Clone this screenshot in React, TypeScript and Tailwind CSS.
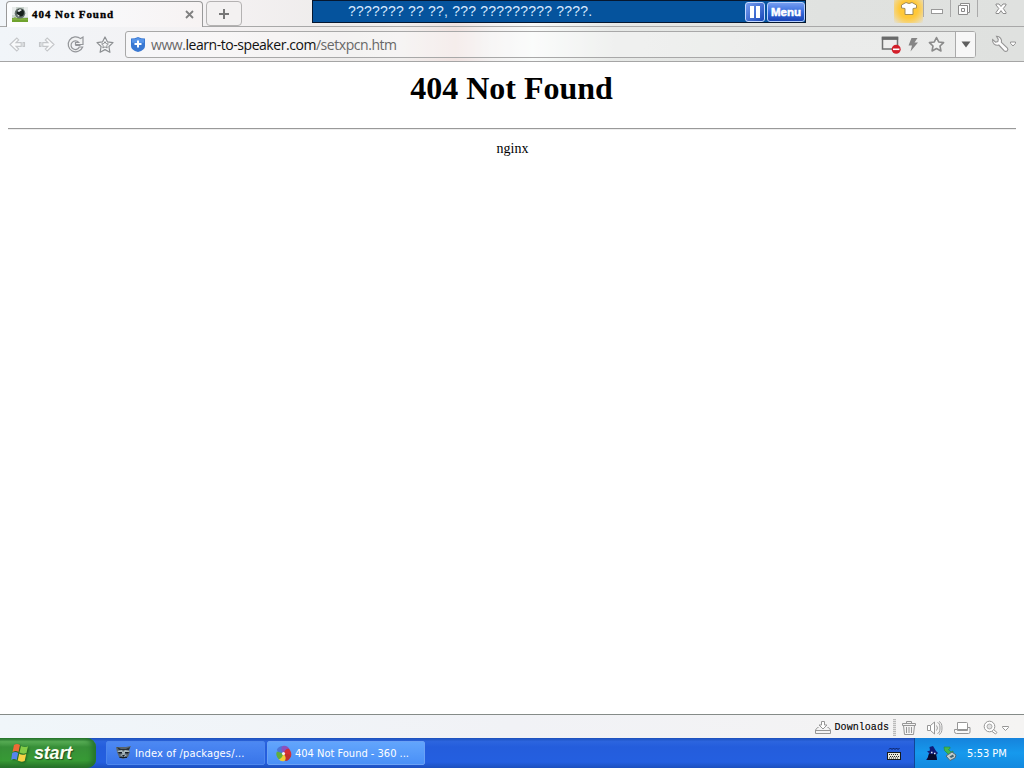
import React from "react";

const sans = "font-['Open_Sans','Noto_Sans',sans-serif]";
const tahoma = "font-['DejaVu_Sans_Condensed','DejaVu_Sans',sans-serif]";

function Favicon() {
  return (
    <svg width="16" height="16" viewBox="0 0 16 16" className="shrink-0">
      <rect width="16" height="12" fill="#c9d2cc" />
      <path d="M0 0h4v8H0zM12 0h4v10h-4z" fill="#e8eceb" />
      <rect y="11" width="16" height="4" fill="#6fa32e" />
      <path d="M0 12l3-2 3 2 4-1 6 1v1H0z" fill="#82ad43" />
      <circle cx="8" cy="6.3" r="5.3" fill="#66736f" />
      <circle cx="8.3" cy="5.7" r="3.7" fill="#17201d" />
      <path d="M5 4l3-2 2 1-3 2zM5 7l3 2-2 .5z" fill="#e9eeee" />
    </svg>
  );
}

function Arrow({ flip = false }: { flip?: boolean }) {
  return (
    <svg width="17" height="17" viewBox="0 0 17 17" className={flip ? "-scale-x-100" : ""}>
      <path d="M1 8.5 7.8 2l1.9 1.9L7 6.6h5.2v3.8H7l2.7 2.7L7.8 15zM14 6.6h1.5v3.8H14z" fill="#f9fafb" stroke="#c4c6c9" strokeWidth="1.1" />
    </svg>
  );
}

function Reload() {
  return (
    <svg width="19" height="19" viewBox="0 0 19 19">
      <path d="M14.6 3.6 17 2v7.500H9.500v-2h3.200a4.300 4.300 0 1 0 .6 4.500h3.400a7.500 7.500 0 1 1-2.100-8.400z" fill="#f1f2f3" stroke="#94969a" strokeWidth="1.2" />
      <path d="M9.500 7.500v3h5" stroke="#94969a" fill="none" />
    </svg>
  );
}

function Star({ small = false }: { small?: boolean }) {
  return small ? (
    <svg width="17" height="17" viewBox="0 0 18 18">
      <path d="m9 1.6 2.3 4.7 5.2.7-3.8 3.6 1 5.2L9 13.3l-4.7 2.5 1-5.2L1.5 7l5.2-.7z" fill="#f2f3f2" stroke="#8b8b8b" strokeWidth="1.7" strokeLinejoin="round" />
    </svg>
  ) : (
    <svg width="18" height="18" viewBox="0 0 18 18">
      <path d="m9 1 2.4 4.8 5.6.8-4.1 3.9 1 5.8L9 13.6l-4.900 2.700 1-5.800L1 6.600l5.600-.8z" fill="#f7f8f9" stroke="#8d9093" strokeWidth="1.2" strokeLinejoin="round" />
      <path d="m9 5.600 1.100 2 2.300.4-1.700 1.600.5 2.400L9 10.900 6.800 12l.5-2.400L5.600 8l2.300-.4z" fill="none" stroke="#8d9093" />
    </svg>
  );
}

function Shield() {
  return (
    <svg width="14" height="15" viewBox="0 0 14 15" className="shrink-0">
      <path d="M0 1.5Q4 1.5 7 0q3 1.5 7 1.5V9q0 4-7 6-7-2-7-6z" fill="#3978d2" />
      <path d="M1 2.3q3.5 0 6-1.3 2.5 1.3 6 1.3v3.5H1z" fill="#5795e9" />
      <path d="M7 3.5v7M3.5 7h7" stroke="#fff" strokeWidth="2" />
    </svg>
  );
}

function BlockedWindow() {
  return (
    <svg width="20" height="18" viewBox="0 0 20 18">
      <rect x="1.500" y="1.500" width="15" height="11.500" fill="#eeeeed" stroke="#6f7070" strokeWidth="1.500" />
      <path d="M.8 2.300h16.400" stroke="#696a6a" strokeWidth="3.200" />
      <circle cx="15.200" cy="13.300" r="4.500" fill="#d31f2a" />
      <path d="M12 13.300h6.400" stroke="#fff" strokeWidth="1.600" />
    </svg>
  );
}

function Wrench() {
  return (
    <svg width="26" height="18" viewBox="0 0 26 18">
      <path d="M5.500 1.300a4.800 4.800 0 0 1 4.900 6l5.800 5.600a2 2 0 0 1-2.900 2.900L7.800 10a4.800 4.800 0 0 1-6.200-5.400l3 2.600 2.200-.6.5-2.200z" fill="#fcfcfc" stroke="#949494" strokeWidth="1.100" />
      <path d="M19.500 7h5v1.300L22 11l-2.500-2.700z" fill="#fff" stroke="#949494" />
    </svg>
  );
}

function WindowControls() {
  return (
    <div className="ml-auto flex h-[23px] shrink-0">
      <div className="flex h-[23px] w-[29px] justify-center bg-[radial-gradient(ellipse_at_50%_40%,#ffc839_0%,#ffc839_45%,#f6d376_68%,rgba(235,222,190,0)_100%)]">
        <svg width="16" height="17" viewBox="0 0 16 17">
          <path d="M5 2.500q3 2 6 0l4.500 2.500v3l-3.500.5V14.500H4V8.500L.5 8V5z" fill="#fff" stroke="#a38d58" />
        </svg>
      </div>
      <div className="flex h-[17px] w-[28px] justify-center border-x border-[#aaa]">
        <svg width="14" height="16" viewBox="0 0 14 16"><rect x="1.500" y="9.500" width="11" height="4" fill="#fff" stroke="#999" /></svg>
      </div>
      <div className="flex h-[17px] w-[27px] justify-center border-r border-[#aaa]">
        <svg width="14" height="16" viewBox="0 0 14 16"><path d="M3.500 3.500h9v9h-2v2h-9v-9h2z" fill="#fcfcfc" stroke="#8c8c8c" /><path d="M3.500 5.500h7v7M4.500 8.500h3v3h-3z" fill="none" stroke="#888" /></svg>
      </div>
      <div className="flex w-[46px] justify-center">
        <svg width="14" height="16" viewBox="0 0 14 16"><path d="M2 4h3l2 2.500L9 4h3v1L9.300 8.500 12 12.500v1H9l-2-2.900-2 2.900H2v-1l2.800-4L2 5z" fill="#fff" stroke="#8c8c8c" /></svg>
      </div>
    </div>
  );
}

function TabStrip() {
  return (
    <div className="relative flex h-[27px] shrink-0 border-b border-[#a8a8a8] pl-[6px]">
      <div className="mt-px flex h-[26px] w-[197px] shrink-0 items-center rounded-t-[4px] border border-b-0 border-[#999] bg-linear-to-r from-[#fcfdfe] via-[#f8f8fa] to-[#f7f3f3] pl-[5px] pr-[8px]">
        <Favicon />
        <span className="ml-[4px] whitespace-pre font-['Liberation_Serif',serif] text-[11px] font-bold leading-none tracking-[0.95px] text-black [-webkit-text-stroke:0.35px_black]">404 Not Found</span>
        <svg width="9" height="9" viewBox="0 0 9 9" className="ml-auto"><path d="m1 1 7 7M8 1 1 8" stroke="#808080" strokeWidth="1.8" /></svg>
      </div>
      <div className="ml-[3px] mt-px flex h-[25px] w-[36px] shrink-0 items-center justify-center rounded-[4px] border border-[#b4b2b2] bg-[#f3f1f1]">
        <svg width="12" height="12" viewBox="0 0 12 12"><path d="M6 1v10M1 6h10" stroke="#777" strokeWidth="2" /></svg>
      </div>
      <WindowControls />
      <div className="absolute left-[312px] top-0 flex h-[23px] w-[494px] items-center border border-[#06172f] bg-[#05539d] pl-[35px]">
        <span className="-mt-px whitespace-pre font-['Liberation_Sans',sans-serif] text-[14px] leading-none tracking-[0.2px] text-[#d7e9ff]">??????? ?? ??, ??? ????????? ????.</span>
        <div className="ml-auto flex h-[20px] w-[20px] items-center justify-center gap-[2px] rounded-[3px] border border-[#c2d8ff] bg-linear-to-br from-[#779df1] to-[#1746b8]">
          <i className="h-[12px] w-[4px] bg-white" /><i className="h-[12px] w-[4px] bg-white" />
        </div>
        <div className="ml-[2px] flex h-[20px] w-[38px] items-center justify-center rounded-[3px] border border-[#b5cffd] bg-linear-to-b from-[#759df0] via-[#356add] to-[#1743b5] pt-[2px] font-['Liberation_Sans',sans-serif] text-[11.5px] font-bold leading-none text-white [-webkit-text-stroke:0.5px_white]">Menu</div>
      </div>
    </div>
  );
}

function Toolbar() {
  return (
    <div className="flex h-[35px] shrink-0 items-center border-b border-[#a5a5a5] pr-[7px]">
      <div className="flex w-[125px] shrink-0 items-center pl-[9px] pt-px">
        <Arrow /><span className="w-[12px]" /><Arrow flip /><span className="w-[11px]" /><Reload /><span className="w-[11px]" /><Star />
      </div>
      <div className="flex h-[27px] w-[851px] shrink-0 items-center rounded-[3px] border border-[#a8a8a8] bg-white/35 pl-[5px]">
        <Shield />
        <span className={`ml-[6px] mt-[2px] whitespace-pre text-[14px] leading-none tracking-[-0.45px] text-[#686868] ${sans}`}>www.<span className="text-[#111]">learn-to-speaker.com</span>/setxpcn.htm</span>
        <div className="ml-auto flex h-full items-center">
          <span className="mt-px"><BlockedWindow /></span>
          <svg width="12" height="16" viewBox="0 0 12 16" className="ml-[6px] mt-px"><path d="M4.500 1H10.500L7.500 5.500H11L3.500 14.500 5 8.500H1.500z" fill="#858585" /></svg>
          <span className="ml-[9px]"><Star small /></span>
          <div className="ml-[10px] flex h-full w-[20px] items-center justify-center border-l border-[#aaa] bg-white/60">
            <svg width="10" height="7" viewBox="0 0 10 7"><path d="M.5.500h9L5 6.500z" fill="#5f5f5f" /></svg>
          </div>
        </div>
      </div>
      <div className="ml-auto"><Wrench /></div>
    </div>
  );
}

function StatusBar() {
  return (
    <div className="flex h-[24px] shrink-0 items-center justify-end border-t border-[#858b88] bg-linear-to-r from-[#f0f6fa] via-[#f1f2f6] to-[#f5f4f3] pr-[14px] pt-[2px]">
      <svg width="16" height="15" viewBox="0 0 16 15" className="-mt-px"><path d="M3.500 7.500h-1L.5 10v3.500h15V10l-2-2.500h-1M.5 10.500h15" fill="none" stroke="#969696" /><path d="M6.500 1.500h3v3.500H12L8 9 4 5h2.500z" fill="#fff" stroke="#969696" /></svg>
      <span className="ml-[4px] font-['Liberation_Mono',monospace] text-[10px] leading-none tracking-[0.05px] text-black [-webkit-text-stroke:0.1px_black]">Downloads</span>
      <div className="-mt-px ml-[4px] h-[17px] w-[3px] bg-[repeating-linear-gradient(#bbb_0_1px,#e4e4e4_1px_2px)]" />
      <svg width="14" height="16" viewBox="0 0 14 16" className="ml-[6px]"><path d="M.5 3.500h13v2H.5zM4.500 3V1.500h5V3M1.500 5.500l1 9h9l1-9M4.500 7v6M7 7v6M9.500 7v6" fill="none" stroke="#969696" /></svg>
      <svg width="18" height="16" viewBox="0 0 18 16" className="ml-[10px]"><path d="M1.500 5.500h3L8.500 2v12l-4-3.500h-3zM4.500 5.500v5" fill="#fff" stroke="#969696" /><path d="M10.500 5.500q2 2.500 0 5M11.500 2.500q2.500.5 2.500 5.500t-2.500 5.500M13 1.500q3 1 3 6.500t-3 6.500" fill="none" stroke="#a0a0a0" /></svg>
      <svg width="18" height="16" viewBox="0 0 18 16" className="ml-[10px]"><path d="M3.500 10.500v-8h9q1 0 1 1v6h-10" fill="#fff" stroke="#969696" /><path d="M3.500 9.500H.5v2q0 2 2 2h12q1.500 0 1.500-1.500V7.500h-2.500v3h-10z" fill="#f7f7f7" stroke="#969696" /></svg>
      <svg width="27" height="16" viewBox="0 0 27 16" className="ml-[11px]"><path d="m10 9 4 3.500-1.500 1.500L8.500 11" fill="#fff" stroke="#969696" /><circle cx="6.500" cy="6.500" r="5.300" fill="#fff" stroke="#969696" /><circle cx="6.500" cy="6.500" r="2.500" fill="#e2e2e2" stroke="#aaa" /><path d="M19.500 6.500h6v1l-3 3-3-3z" fill="#fff" stroke="#969696" /></svg>
    </div>
  );
}

function WindowsFlag() {
  return (
    <svg width="18" height="18" viewBox="0 0 18 18" className="-mt-px drop-shadow-[1px_1px_1px_rgba(0,40,0,.5)]">
      <path d="M3 1q3-2 6 0L7.500 8q-3-2-6 0z" fill="#ee6b36" />
      <path d="M10 2q3.500 2 7 .2L15.500 9q-3.500 1.500-7-.5z" fill="#83cc47" />
      <path d="M1.200 9q3-2 6 0l-1.500 7q-3-2-5.500 0z" fill="#5685ed" />
      <path d="M8.200 9.700q3 2 7 .2L13.700 17q-3.500 1.500-7-.5z" fill="#f7d245" />
    </svg>
  );
}

function Raccoon() {
  return (
    <svg width="15" height="14" viewBox="0 0 15 14">
      <path d="m0 1 4 0h6l5-1-2 4 1 2-2 5-5 2-4-2-2-5z" fill="#59646c" />
      <path d="m1 1 4 2h5l4-2-1 3H3z" fill="#263039" />
      <path d="m1 5 5-1 1 2 2-2 5 1-3 2-3 1-4-1zM4 9l3-1 4 1-3 2z" fill="#aabac0" />
      <path d="M2 6h4v1.500H3zM9 6h4l-1 1.500H9zM6 9h3l-1.500 2zM3 11h8v1H4z" fill="#131d28" />
    </svg>
  );
}

function Pinwheel() {
  return (
    <svg width="17" height="17" viewBox="0 0 18 18">
      <path d="M9 9Q3 9 2 5q2-4 6-4z" fill="#4c75d8" /><path d="M9 9Q5 4 8 1q5-1 7 3z" fill="#8b51bd" />
      <path d="M9 9q2-6 6-5 3 4 2 8z" fill="#d52e35" /><path d="M9 9q6 0 8 3-2 5-6 5z" fill="#c12f2e" />
      <path d="M9 9q4 5 1 8-4 1-6-2z" fill="#f0cb35" /><path d="M9 9q-2 6-5 6-4-4-2-8z" fill="#61ad3c" />
      <circle cx="9" cy="9" r="1.700" fill="#f3eff4" />
    </svg>
  );
}

function Taskbar() {
  return (
    <div className={`flex h-[30px] shrink-0 bg-[linear-gradient(180deg,#1c50bb_0%,#2c65df_12%,#245ddc_30%,#245fe0_80%,#1b4fbe_100%)] text-[11px] text-white ${tahoma}`}>
      <div className="flex w-[96px] shrink-0 items-center rounded-r-[9px] bg-[linear-gradient(180deg,#23722c_0%,#58ad55_12%,#378f38_30%,#379a35_75%,#256f28_100%)] pl-[11px] shadow-[inset_-4px_0_5px_#26742c]">
        <WindowsFlag />
        <span className="ml-[5px] font-['Liberation_Sans',sans-serif] text-[18px] font-bold italic leading-none tracking-[-0.2px] text-[#fbfff2] [text-shadow:1px_1px_1px_#244b20]">start</span>
      </div>
      <div className="ml-[10px] mt-[3px] flex h-[24px] w-[159px] shrink-0 items-center rounded-[2px] border border-[#4d86ec] bg-linear-to-b from-[#4c88f3] to-[#3975e9] pl-[9px]">
        <Raccoon /><span className="ml-[4px] whitespace-pre leading-none tracking-[0.16px]">Index of /packages/...</span>
      </div>
      <div className="ml-[2px] mt-[3px] flex h-[24px] w-[158px] shrink-0 items-center rounded-[2px] border border-[#6aa1f5] bg-linear-to-b from-[#62a5fc] to-[#4a90f7] pl-[7px]">
        <Pinwheel /><span className="ml-[3px] whitespace-pre leading-none">404 Not Found - 360 ...</span>
      </div>
      <div className="ml-auto flex w-[27px] items-center">
        <svg width="14" height="15" viewBox="0 0 14 15"><path d="M2 3.500 3.500 2 5 3.500 6.500 2 8 3.500 9.500 2 11 3.500 12.500 2" fill="none" stroke="#0a1c58" /><rect x=".5" y="6.500" width="13" height="7" fill="#e9e9df" stroke="#151a1d" /><path d="M2 8.500h10M3 10.500h9M2 12h10" stroke="#26292b" strokeDasharray="1 1" /></svg>
      </div>
      <div className="flex w-[110px] shrink-0 items-center border-l border-[#104696] bg-linear-to-b from-[#1683dc] via-[#1699ed] to-[#1389df] pl-[10px]">
        <svg width="14" height="15" viewBox="0 0 14 15"><path d="M4.500 1 8 0l3 5 2 2-2 2 1 5H1q3-3 3-7L2 5.500l3-1z" fill="#101c78" /><path d="M4 8h7l1 6H2z" fill="#080b2c" /><path d="M6 6.500h1.500M9 7.500h1.500" stroke="#e4eaf5" strokeWidth="1.500" /></svg>
        <svg width="15" height="15" viewBox="0 0 15 15" className="ml-[4px]"><path d="M1 1h6v1.500L5.500 3.500 8 6l2-1v5H4l1.500-1.500-4-4z" fill="#43b74c" stroke="#218a3c" strokeWidth=".6" /><path d="m3 10 6-4 4 3-1 3-5 2.500z" fill="#c3cfce" stroke="#506775" /><path d="m6.500 10.500 3.500-2 1 2-3 1.500z" fill="#416270" /></svg>
        <span className="ml-[9px] whitespace-nowrap leading-none">5:53 PM</span>
      </div>
    </div>
  );
}

export default function App() {
  return (
    <div className="flex h-[768px] w-[1024px] flex-col overflow-hidden bg-white">
      <header className="flex h-[62px] shrink-0 flex-col bg-[linear-gradient(90deg,#f1f5f9_0%,#f4f1f2_22%,#eeeceb_33%,#f1efee_39%,#f0e3e1_44.5%,#f3f1f1_48%,#f8faf9_52%,#e7e9e7_60%,#e0e2e0_80%,#dfe1df_100%)]">
        <TabStrip />
        <Toolbar />
      </header>
      <main className="flex-1 bg-white px-[8px] text-center font-['Liberation_Serif',serif] text-black">
        <h1 className="mt-[8px] h-[36px] pr-px text-[32px] font-bold leading-[36px]">404 Not Found</h1>
        <hr className="mt-[22px] h-[2px] border-0 border-t border-[#999] bg-[#eee]" />
        <p className="mt-[10px] pl-px text-[14px] leading-[18px]">nginx</p>
      </main>
      <StatusBar />
      <Taskbar />
    </div>
  );
}
